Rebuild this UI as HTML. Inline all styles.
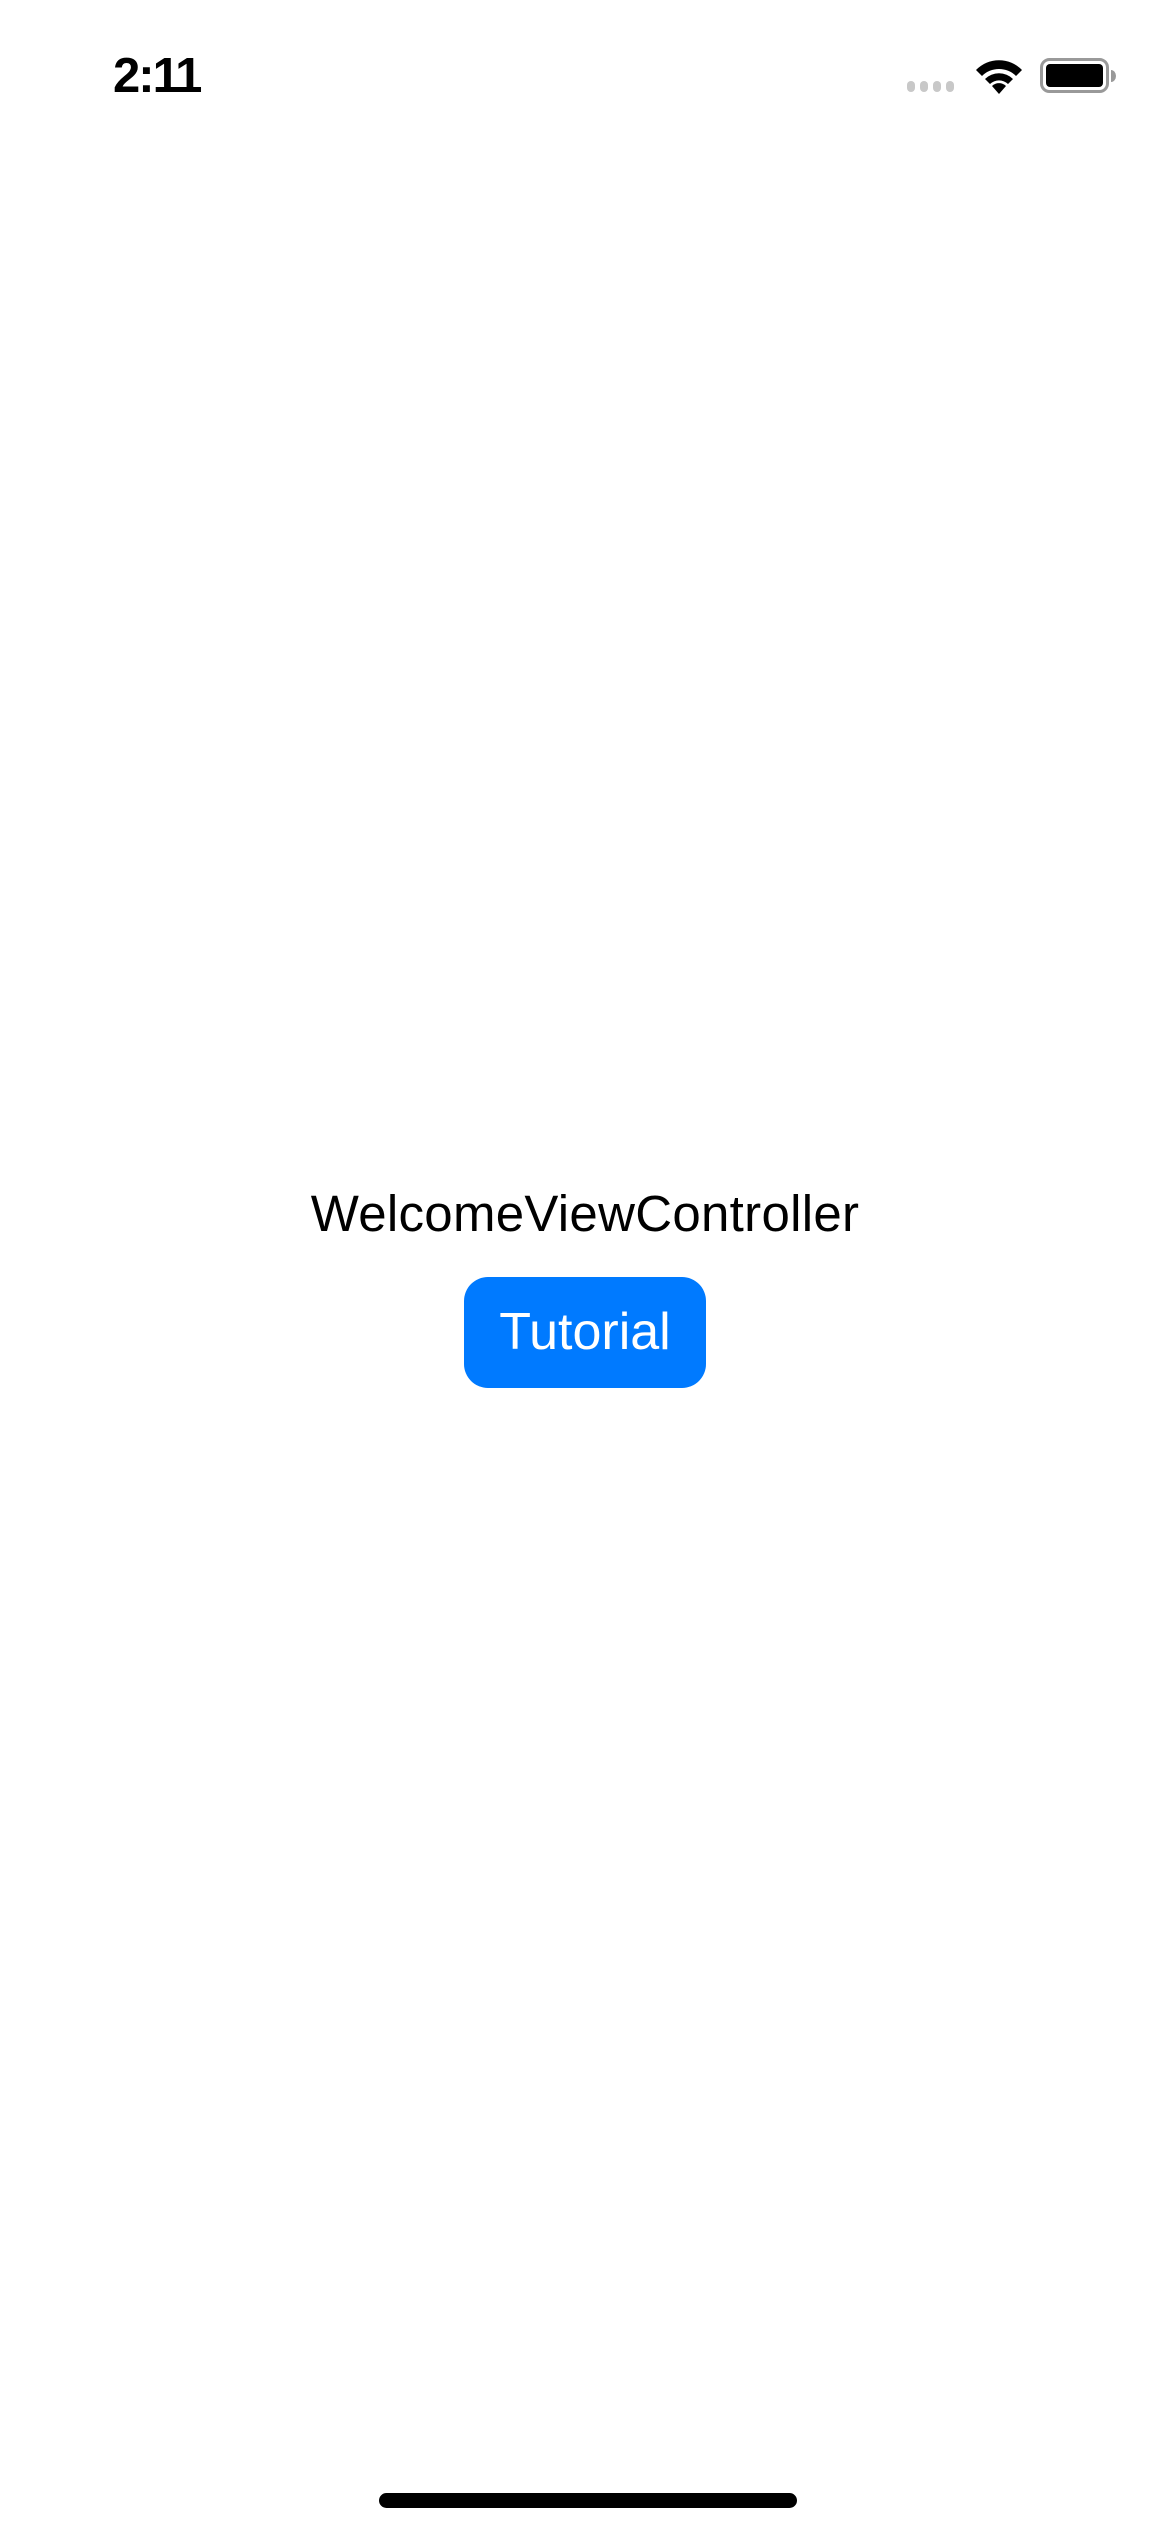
<!DOCTYPE html>
<html><head><meta charset="utf-8"><style>
html,body{margin:0;padding:0;background:#fff;}
body{width:1170px;height:2532px;position:relative;overflow:hidden;font-family:"Liberation Sans",sans-serif;}
.time{position:absolute;left:113px;top:48px;font-size:49px;font-weight:bold;letter-spacing:-2px;color:#000;}
.dot{position:absolute;top:81px;width:8px;height:11px;border-radius:4px;background:#c8c8c8;}
.title{position:absolute;left:0;width:1170px;top:1184px;text-align:center;font-size:51px;color:#000;letter-spacing:0.3px;}
.btn{position:absolute;left:464px;top:1277px;width:242px;height:111px;background:#007aff;border-radius:24px;color:#fff;font-size:52px;text-align:center;line-height:111px;}
.home{position:absolute;left:379px;top:2493px;width:418px;height:15px;border-radius:7.5px;background:#000;}
</style></head><body>
<div class="time">2:11</div>
<div class="dot" style="left:907px"></div>
<div class="dot" style="left:920px"></div>
<div class="dot" style="left:933px"></div>
<div class="dot" style="left:946px"></div>
<svg style="position:absolute;left:972px;top:56px" width="54" height="38" viewBox="0 0 54 38">
<path d="M27 38 L20 30 A10 10 0 0 1 34 30 Z" fill="#000"/>
<path d="M13 23 A20 20 0 0 1 41 23 L36 28 A13 13 0 0 0 18 28 Z" fill="#000"/>
<path d="M4 14 A32 32 0 0 1 50 14 L44 20 A24 24 0 0 0 10 20 Z" fill="#000"/>
</svg>
<svg style="position:absolute;left:1040px;top:58px" width="78" height="36" viewBox="0 0 78 36">
<rect x="1.5" y="1.5" width="66" height="32" rx="8" fill="none" stroke="#999" stroke-width="3"/>
<rect x="6" y="6" width="57" height="23" rx="4" fill="#000"/>
<path d="M71 12 A5 6 0 0 1 71 24 Z" fill="#999"/>
</svg>
<div class="title">WelcomeViewController</div>
<div class="btn">Tutorial</div>
<div class="home"></div>
</body></html>
